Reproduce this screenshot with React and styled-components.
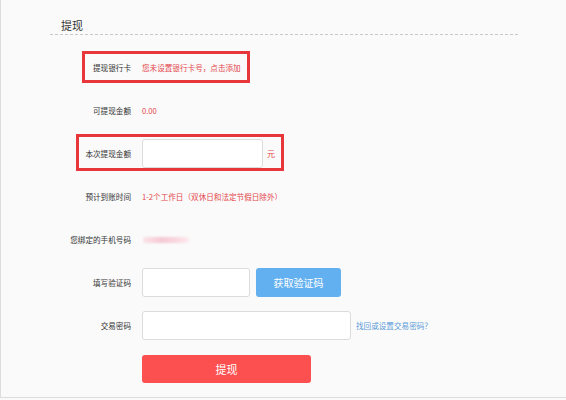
import React from "react";
import styled, { createGlobalStyle } from "styled-components";

const Global = createGlobalStyle`
  html, body { margin: 0; padding: 0; background: #fafafa; }
  body { font-family: "Microsoft YaHei", "Noto Sans CJK SC", "Liberation Sans", sans-serif; }
  * { box-sizing: border-box; }
`;

const Panel = styled.div`
  width: 566px;
  height: 398px;
  background: #fafafa;
  border-left: 1px solid #dcdcdc;
  border-bottom: 1px solid #dcdcdc;
  padding: 0 48px 0 49px;
`;

const Title = styled.h2`
  margin: 0;
  font-size: 11px;
  font-weight: normal;
  color: #333;
  padding: 18px 0 0 11px;
  height: 35px;
  line-height: 14px;
  border-bottom: 1px dashed #c8c8c8;
`;

const Form = styled.div`
  padding-top: 11px;
  display: flex;
  flex-direction: column;
`;

const Row = styled.div`
  position: relative;
  height: 43px;
  display: flex;
  align-items: center;
  gap: 11px;
`;

const Highlight = styled.div`
  position: absolute;
  left: ${(p) => p.$left}px;
  top: ${(p) => p.$top}px;
  width: ${(p) => p.$width}px;
  height: ${(p) => p.$height}px;
  border: 3px solid #e8373a;
  pointer-events: none;
`;

const Label = styled.span`
  width: 81px;
  flex: none;
  text-align: right;
  font-size: 7.6px;
  color: #333;
`;

const Value = styled.span`
  font-size: 7.6px;
  color: ${(p) => (p.$blue ? "#5a9ad8" : "#e4464b")};
  margin-left: ${(p) => p.$ml || 0}px;
`;

const Input = styled.input`
  width: ${(p) => p.$w}px;
  height: 29px;
  border: 1px solid #dcdcdc;
  border-radius: 3px;
  background: #fff;
  outline: none;
  margin: 0;
  padding: 0 6px;
  flex: none;
`;

const Unit = styled.span`
  font-size: 8px;
  color: #e4464b;
  margin-left: -7px;
`;

const Blur = styled.span`
  display: inline-block;
  width: 46px;
  height: 6px;
  margin-left: 1px;
  border-radius: 3px;
  background: linear-gradient(90deg, #fbe3e8, #f6c9d3 40%, #f9d6de 70%, #fde9ed);
  filter: blur(1px);
`;

const Button = styled.button`
  flex: none;
  width: ${(p) => p.$w}px;
  height: ${(p) => p.$h}px;
  margin-left: ${(p) => p.$ml || 0}px;
  border: none;
  border-radius: 3px;
  color: #fff;
  background: ${(p) => (p.$variant === "blue" ? "#62b0f0" : "#fc4f50")};
  font-family: inherit;
  font-size: ${(p) => p.$fs}px;
  padding: 0;
  cursor: pointer;
`;

const Spacer = styled.span`
  width: 81px;
  flex: none;
`;

export default function App() {
  return (
    <>
      <Global />
      <Panel>
        <Title>提现</Title>
        <Form>
          <Row>
            <Highlight $left={32} $top={5} $width={168} $height={32} />
            <Label>提现银行卡</Label>
            <Value>您未设置银行卡号，点击添加</Value>
          </Row>
          <Row>
            <Label>可提现金额</Label>
            <Value>0.00</Value>
          </Row>
          <Row>
            <Highlight $left={26} $top={2} $width={208} $height={37} />
            <Label>本次提现金额</Label>
            <Input $w={121} />
            <Unit>元</Unit>
          </Row>
          <Row>
            <Label>预计到账时间</Label>
            <Value>1-2个工作日（双休日和法定节假日除外）</Value>
          </Row>
          <Row>
            <Label>您绑定的手机号码</Label>
            <Blur />
          </Row>
          <Row>
            <Label>填写验证码</Label>
            <Input $w={108} />
            <Button $variant="blue" $w={85} $h={29} $fs={10} $ml={-5}>获取验证码</Button>
          </Row>
          <Row>
            <Label>交易密码</Label>
            <Input $w={209} />
            <Value $blue $ml={-6}>找回或设置交易密码？</Value>
          </Row>
          <Row>
            <Spacer />
            <Button $variant="red" $w={169} $h={28} $fs={11}>提现</Button>
          </Row>
        </Form>
      </Panel>
    </>
  );
}
